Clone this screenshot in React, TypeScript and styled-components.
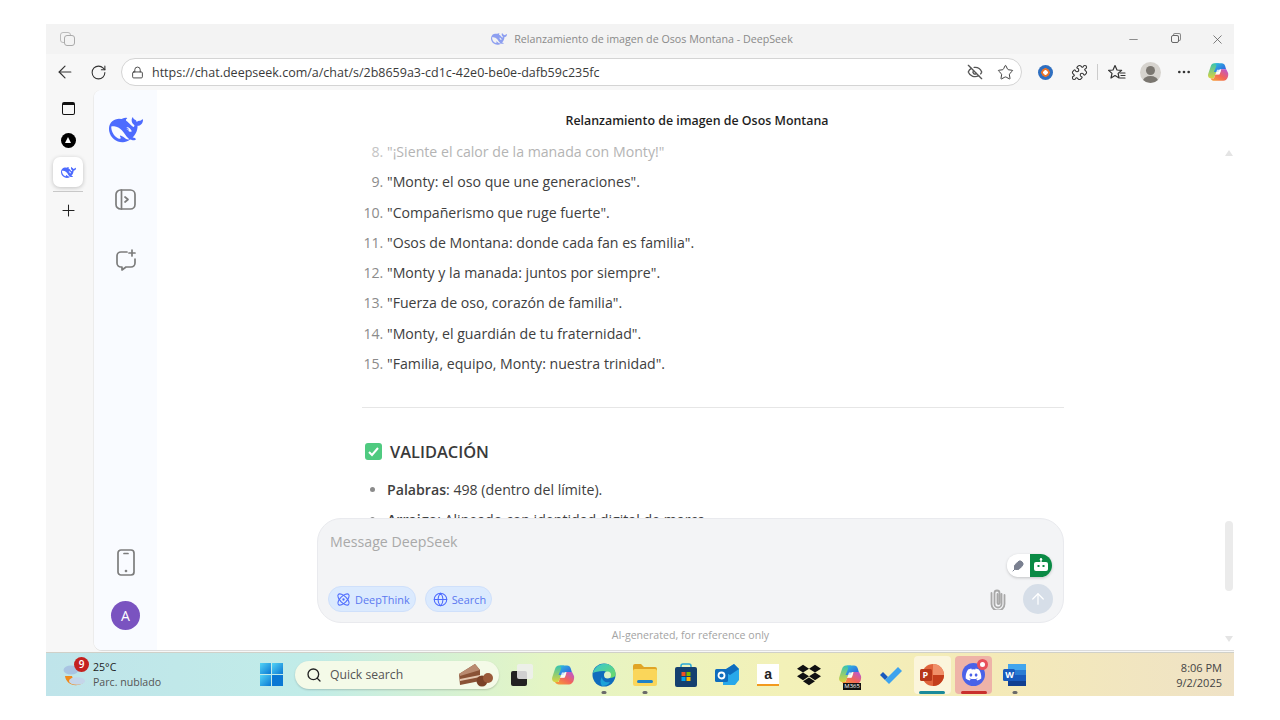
import React from "react";
import styled, { createGlobalStyle } from "styled-components";
import {
  ArrowLeft,
  ArrowUp,
  Atom,
  Feather,
  Globe,
  Lock,
  Minus,
  MoreHorizontal,
  Plus,
  RotateCw,
  Search,
  Star,
  X,
  EyeOff,
  Puzzle,
} from "lucide-react";
import { FaDiscord, FaDropbox } from "react-icons/fa";

const FONT = `"Open Sans", "Noto Sans", "Liberation Sans", sans-serif`;
const BLUE = "#4d6bfe";
const RED = "#c9302c";

const GlobalStyle = createGlobalStyle`
  html, body { margin: 0; padding: 0; background: #fff; }
  * { box-sizing: border-box; }
  body { font-family: ${FONT}; }
`;

const WHALE =
  "M23.748 4.482c-.254-.124-.364.113-.512.234-.051.039-.094.09-.137.136-.372.397-.806.657-1.373.626-.829-.046-1.537.214-2.163.848-.133-.782-.575-1.248-1.247-1.548-.352-.156-.708-.311-.955-.65-.172-.241-.219-.51-.305-.774-.055-.16-.11-.323-.293-.35-.2-.031-.278.136-.356.276-.313.572-.434 1.202-.422 1.84.027 1.436.633 2.58 1.838 3.393.137.093.172.187.129.323-.082.28-.18.552-.266.833-.055.179-.137.217-.329.14a5.526 5.526 0 01-1.736-1.18c-.857-.828-1.631-1.742-2.597-2.458a11.365 11.365 0 00-.689-.471c-.985-.957.13-1.743.388-1.836.27-.098.093-.432-.779-.428-.872.004-1.67.295-2.687.684a3.055 3.055 0 01-.465.137 9.597 9.597 0 00-2.883-.102c-1.885.21-3.39 1.102-4.497 2.623C.082 8.606-.231 10.684.152 12.85c.403 2.284 1.569 4.175 3.36 5.653 1.858 1.533 3.997 2.284 6.438 2.14 1.482-.085 3.133-.284 4.994-1.86.47.234.962.327 1.78.397.63.059 1.236-.03 1.705-.128.735-.156.684-.837.419-.961-2.155-1.004-1.682-.595-2.113-.926 1.096-1.296 2.746-2.642 3.392-7.003.05-.347.007-.565 0-.845-.004-.17.035-.237.23-.256a4.173 4.173 0 001.545-.475c1.396-.763 1.96-2.015 2.093-3.517.02-.23-.004-.467-.247-.588zM11.581 18c-2.089-1.642-3.102-2.183-3.52-2.16-.392.024-.321.471-.235.763.09.288.207.486.371.739.114.167.192.416-.113.603-.673.416-1.842-.14-1.897-.167-1.361-.802-2.5-1.86-3.301-3.307-.774-1.393-1.224-2.887-1.298-4.482-.02-.386.093-.522.477-.592a4.696 4.696 0 011.529-.039c2.132.312 3.946 1.265 5.468 2.774.868.86 1.525 1.887 2.202 2.891.72 1.066 1.494 2.082 2.48 2.914.348.292.625.514.891.677-.802.09-2.14.11-3.054-.614zm1-6.44a.306.306 0 01.415-.287.302.302 0 01.2.288.306.306 0 01-.31.307.303.303 0 01-.304-.308zm3.11 1.596c-.2.081-.399.151-.59.16a1.245 1.245 0 01-.798-.254c-.274-.23-.47-.358-.552-.758a1.73 1.73 0 01.016-.588c.07-.327-.008-.537-.239-.727-.187-.156-.426-.199-.688-.199a.559.559 0 01-.254-.078c-.11-.054-.2-.19-.114-.358.028-.054.16-.186.192-.21.356-.202.767-.136 1.146.016.352.144.618.408 1.001.782.391.451.462.576.685.914.176.265.336.537.445.848.067.195-.019.354-.25.452z";

const Whale = ({ size, color = BLUE }: { size: number; color?: string }) => (
  <svg width={size} height={size} viewBox="0 0 24 24" fill={color}>
    <path d={WHALE} />
  </svg>
);

const CopilotIcon = ({ size, id }: { size: number; id: string }) => (
  <svg width={size} height={size} viewBox="0 0 24 24">
    <defs>
      <linearGradient id={`${id}A`} x1="0" y1="0" x2="1" y2="1">
        <stop offset="0" stopColor="#2fc0e0" />
        <stop offset="1" stopColor="#2f55e0" />
      </linearGradient>
      <linearGradient id={`${id}B`} x1="0" y1="1" x2="1" y2="0">
        <stop offset="0" stopColor="#f7a733" />
        <stop offset="0.5" stopColor="#f2645a" />
        <stop offset="1" stopColor="#b455e0" />
      </linearGradient>
      <linearGradient id={`${id}C`} x1="0" y1="0" x2="0" y2="1">
        <stop offset="0" stopColor="#35c4b0" />
        <stop offset="1" stopColor="#dcd43e" />
      </linearGradient>
    </defs>
    <path d="M8 2.500h5L10 14l-3 5H4.500C2 19 .6 17 1.200 14.500L4 6c.7-2.300 2-3.500 4-3.500z" fill={`url(#${id}C)`} />
    <path d="M8 2.500h8c2 0 3.200 1.200 3.800 3l1 3.500H14l-1.500 3H7.500L10 6c.5-1.500-.5-3.500-2-3.500z" fill={`url(#${id}A)`} />
    <path d="M23 13c.7 3-.9 8.500-5 8.500H8c-2 0-3.400-1-4-2.500h3.500l2-5h4.500l1.500-5h5.500z" fill={`url(#${id}B)`} />
    <path d="M11 9.500h4.500L13.500 15H9z" fill="#fff" fillOpacity="0.8" />
  </svg>
);

const Windows = () => (
  <svg width="23" height="23" viewBox="0 0 22 22">
    <defs>
      <linearGradient id="winA" x1="0" y1="0" x2="1" y2="1">
        <stop offset="0" stopColor="#52d3f5" />
        <stop offset="1" stopColor="#0a78d4" />
      </linearGradient>
    </defs>
    <rect x="0" y="0" width="10.500" height="10.500" fill="url(#winA)" />
    <rect x="11.500" y="0" width="10.500" height="10.500" fill="url(#winA)" />
    <rect x="0" y="11.500" width="10.500" height="10.500" fill="url(#winA)" />
    <rect x="11.500" y="11.500" width="10.500" height="10.500" fill="#0a78d4" />
  </svg>
);

const Weather = () => (
  <svg width="30" height="30" viewBox="0 0 30 30">
    <ellipse cx="9" cy="10" rx="7.500" ry="4.500" fill="#a9c4e2" />
    <path d="M3 16c1 8 10 12 18 7-7 .5-10-2-11-7z" fill="#f08a1c" />
    <ellipse cx="15" cy="21" rx="8" ry="3.800" fill="#c5d6ea" />
  </svg>
);

const Cake = () => (
  <svg width="34" height="24" viewBox="0 0 34 24">
    <path d="M0 11 16 1l5 6v11L1 22z" fill="#8a5236" />
    <path d="M0 11 16 1l5 6L1 13z" fill="#b98a70" />
    <path d="M1 16l20-4v2L1 18z" fill="#e5c7b0" />
    <circle cx="23" cy="18" r="5.500" fill="#7b4228" />
    <circle cx="29" cy="15" r="5" fill="#9a5a3a" />
  </svg>
);

const TaskView = () => (
  <svg width="24" height="24" viewBox="0 0 24 24">
    <rect x="1" y="8" width="16" height="15" rx="2" fill="#222" />
    <rect x="7" y="1" width="16" height="15" rx="2" fill="#eee" fillOpacity="0.85" />
  </svg>
);

const Edge = () => (
  <svg width="24" height="24" viewBox="0 0 24 24">
    <defs>
      <linearGradient id="edA" x1="0" y1="0" x2="1" y2="1">
        <stop offset="0" stopColor="#36c6d6" />
        <stop offset="1" stopColor="#6fdc5e" />
      </linearGradient>
    </defs>
    <circle cx="12" cy="12" r="11.500" fill="#0f6cbd" />
    <path d="M1 10C3 2 12-1 18 2c4 2 6 6 5.500 10-.2 2-3 3-6 3-2 0-3-1-2.500-2 .8-2-.5-5-3.500-5C6 8 3 9 1 10z" fill="url(#edA)" />
    <path d="M10 14c0 4 4 6 8 5-2 3-5 4-8 4-2-3-2-6 0-9z" fill="#1aa3d8" />
    <circle cx="15.500" cy="12" r="3.500" fill="#ddf3c8" />
  </svg>
);

const Folder = () => (
  <svg width="24" height="22" viewBox="0 0 24 22">
    <path d="M0 2a2 2 0 012-2h6l3 3h11a2 2 0 012 2v2H0z" fill="#e0a525" />
    <rect x="0" y="5" width="24" height="17" rx="2" fill="#fad65a" />
    <rect x="4" y="16" width="16" height="3" rx="1.500" fill="#1f82c8" />
  </svg>
);

const Store = () => (
  <svg width="22" height="24" viewBox="0 0 22 24">
    <path d="M6 5V3a2 2 0 012-2h6a2 2 0 012 2v2" fill="none" stroke="#28a8d8" strokeWidth="1.500" />
    <rect x="0" y="4" width="22" height="20" rx="2" fill="#15406f" />
    <rect x="6.500" y="9" width="4" height="4" fill="#f25022" />
    <rect x="11.500" y="9" width="4" height="4" fill="#7fba00" />
    <rect x="6.500" y="14" width="4" height="4" fill="#00a4ef" />
    <rect x="11.500" y="14" width="4" height="4" fill="#ffb900" />
  </svg>
);

const Outlook = () => (
  <svg width="24" height="22" viewBox="0 0 24 22">
    <path d="M8 7 19 0l5 5v11l-4 5H8z" fill="#28a8ea" />
    <path d="M8 7 19 0l5 5-9 6z" fill="#0f6cbd" />
    <rect x="0" y="5" width="13" height="13" rx="1.500" fill="#0f6cbd" />
    <circle cx="6.500" cy="11.500" r="3" fill="none" stroke="#fff" strokeWidth="1.800" />
  </svg>
);

const ToDo = () => (
  <svg width="24" height="18" viewBox="0 0 24 18">
    <path d="M1 9l3-3 5 5-3 3z" fill="#195abd" />
    <path d="M6 14 19 1l4 4L10 18z" fill="#3da3ee" />
  </svg>
);

const PowerPoint = () => (
  <svg width="24" height="22" viewBox="0 0 24 22">
    <circle cx="13" cy="11" r="11" fill="#e0643c" />
    <path d="M13 0a11 11 0 0111 11H13z" fill="#f0906a" />
    <path d="M13 11h11a11 11 0 01-11 11z" fill="#c43e1c" />
    <rect x="0" y="5" width="12" height="12" rx="1.500" fill="#b7381a" />
  </svg>
);

const WordSheet = () => (
  <svg width="23" height="22" viewBox="0 0 23 22">
    <rect x="5" y="0" width="18" height="22" rx="2" fill="#2b7cd3" />
    <rect x="5" y="0" width="18" height="6" fill="#41a5ee" />
    <rect x="5" y="11" width="18" height="6" fill="#185abd" />
    <rect x="5" y="17" width="18" height="5" fill="#103f91" />
    <rect x="0" y="5" width="12" height="12" rx="1.500" fill="#185abd" />
  </svg>
);

const FavoritesIcon = () => (
  <svg width="18" height="17" viewBox="0 0 18 17" fill="none" stroke="#333" strokeWidth="1.200" strokeLinejoin="round">
    <path d="M7 1.500 9 6l4.600.4-3.500 3 1 4.600L7 11.600 3 14l1-4.600-3.400-3L5 6z" />
    <path d="M12 9h5M13 11.500h4M12 14h5" strokeLinecap="round" />
  </svg>
);

const PhoneIcon = () => (
  <svg width="18" height="27" viewBox="0 0 18 27" fill="none" stroke="#7c7c7c" strokeWidth="1.700">
    <rect x="1" y="1" width="16" height="25" rx="3" />
    <path d="M7 4.500h4" strokeLinecap="round" />
    <circle cx="9" cy="22" r="0.500" fill="#7c7c7c" />
  </svg>
);

const ClipIcon = () => (
  <svg width="16" height="22" viewBox="0 0 16 22" fill="none" stroke="#a8a8a8" strokeWidth="1.800" strokeLinecap="round">
    <path d="M11.500 6v10a3.500 3.500 0 01-7 0V5a2.500 2.500 0 015 0v10a1 1 0 01-2 0V6" />
    <path d="M14.500 7v9a6.500 6.500 0 01-13 0V5" />
  </svg>
);

const BotIcon = () => (
  <svg width="16" height="15" viewBox="0 0 16 15">
    <rect x="1" y="4" width="14" height="9" rx="2" fill="#fff" />
    <path d="M8 4V1.500" stroke="#fff" strokeWidth="1.300" />
    <circle cx="8" cy="1.300" r="1.200" fill="#fff" />
    <rect x="4.500" y="7" width="2" height="2" fill="#0a8a45" />
    <rect x="9.500" y="7" width="2" height="2" fill="#0a8a45" />
  </svg>
);

const CheckIcon = () => (
  <svg width="17" height="17" viewBox="0 0 17 17">
    <rect width="17" height="17" rx="3" fill="#4fca80" />
    <path d="M4 9l3 3 6-7" fill="none" stroke="#fff" strokeWidth="2" />
  </svg>
);

const items = [
  '"¡Siente el calor de la manada con Monty!"',
  '"Monty: el oso que une generaciones".',
  '"Compañerismo que ruge fuerte".',
  '"Osos de Montana: donde cada fan es familia".',
  '"Monty y la manada: juntos por siempre".',
  '"Fuerza de oso, corazón de familia".',
  '"Monty, el guardián de tu fraternidad".',
  '"Familia, equipo, Monty: nuestra trinidad".',
];

const App = () => {
  return (
    <Page>
      <GlobalStyle />
      <BrowserWindow>
        <TitleBar>
          <WorkspaceIcon>
            <WorkspaceBack />
            <WorkspaceFront />
          </WorkspaceIcon>
          <TabTitle>
            <Whale size={16} color="#8d9ff0" />
            <span>Relanzamiento de imagen de Osos Montana - DeepSeek</span>
          </TabTitle>
          <WindowControls>
            <Minus size={13} strokeWidth={1.2} />
            <RestoreIcon />
            <X size={15} strokeWidth={1.2} />
          </WindowControls>
        </TitleBar>

        <Toolbar>
          <ToolIcon $width={38}>
            <ArrowLeft size={20} strokeWidth={1.4} />
          </ToolIcon>
          <ToolIcon $width={28}>
            <RotateCw size={17} strokeWidth={1.5} />
          </ToolIcon>
          <UrlBar>
            <Lock size={13} strokeWidth={1.6} />
            <UrlText>
              https://chat.deepseek.com/a/chat/s/2b8659a3-cd1c-42e0-be0e-dafb59c235fc
            </UrlText>
            <UrlActions>
              <EyeOff size={16} strokeWidth={2} color="#555" />
              <Star size={17} strokeWidth={1.3} color="#333" />
            </UrlActions>
          </UrlBar>
          <ExtensionBox>
            <ToolIcon $width={34}>
              <ExtensionBadge />
            </ToolIcon>
            <ToolIcon $width={34}>
              <Puzzle size={17} strokeWidth={1.5} />
            </ToolIcon>
            <ToolDivider />
            <ToolIcon $width={34}>
              <FavoritesIcon />
            </ToolIcon>
            <ToolIcon $width={32}>
              <ProfileBadge>
                <ProfileHead />
                <ProfileBody />
              </ProfileBadge>
            </ToolIcon>
            <ToolIcon $width={36}>
              <MoreHorizontal size={16} />
            </ToolIcon>
            <ToolIcon $width={32}>
              <CopilotIcon size={22} id="cpTool" />
            </ToolIcon>
          </ExtensionBox>
        </Toolbar>

        <Body>
          <EdgeBar>
            <EdgeIcon>
              <PanelGlyph />
            </EdgeIcon>
            <EdgeIcon>
              <BlackDot />
            </EdgeIcon>
            <ActiveTile>
              <Whale size={15} />
            </ActiveTile>
            <EdgeDivider />
            <EdgeIcon>
              <Plus size={19} strokeWidth={1.3} />
            </EdgeIcon>
          </EdgeBar>

          <MainPanel>
            <Rail>
              <Whale size={34} />
              <RailButton $top={42}>
                <svg width="21" height="21" viewBox="0 0 21 21" fill="none" stroke="#7c7c7c" strokeWidth="1.700">
                  <rect x="1" y="1" width="19" height="19" rx="4.500" />
                  <path d="M6.500 1v19M10 8l3 2.500-3 2.500" strokeLinecap="round" strokeLinejoin="round" />
                </svg>
              </RailButton>
              <RailButton $top={39}>
                <svg width="22" height="22" viewBox="0 0 22 22" fill="none" stroke="#7c7c7c" strokeWidth="1.700" strokeLinecap="round" strokeLinejoin="round">
                  <path d="M12 3H6a4 4 0 00-4 4v7a4 4 0 004 4h1v3l4-3h5a4 4 0 004-4v-4" />
                  <path d="M17 1v6M14 4h6" />
                </svg>
              </RailButton>
              <RailSpacer />
              <PhoneIcon />
              <Avatar>A</Avatar>
            </Rail>

            <ChatColumn>
              <ChatTitle>Relanzamiento de imagen de Osos Montana</ChatTitle>
              <Thread>
                <NumberList start={8}>
                  {items.map((text, i) => (
                    <NumberItem key={text} $faded={i === 0}>
                      {text}
                    </NumberItem>
                  ))}
                </NumberList>
                <Rule />
                <SectionHead>
                  <CheckIcon />
                  VALIDACIÓN
                </SectionHead>
                <BulletList>
                  <li>
                    <strong>Palabras</strong>: 498 (dentro del límite).
                  </li>
                  <li>
                    <strong>Arraigo</strong>: Alineado con identidad digital de marca
                  </li>
                </BulletList>
              </Thread>

              <Composer>
                <Placeholder>Message DeepSeek</Placeholder>
                <ModelRow>
                  <ModelToggle>
                    <ModelSide>
                      <Feather size={12} color="#7a8090" fill="#7a8090" />
                    </ModelSide>
                    <ModelSide $active>
                      <BotIcon />
                    </ModelSide>
                  </ModelToggle>
                </ModelRow>
                <ComposerFoot>
                  <Chip>
                    <Atom size={15} strokeWidth={1.7} />
                    DeepThink
                  </Chip>
                  <Chip>
                    <Globe size={15} strokeWidth={1.7} />
                    Search
                  </Chip>
                  <FootSpacer />
                  <ClipIcon />
                  <SendButton>
                    <ArrowUp size={18} strokeWidth={1.6} color="#fff" />
                  </SendButton>
                </ComposerFoot>
              </Composer>
              <Disclaimer>AI-generated, for reference only</Disclaimer>

              <ScrollTrack>
                <ScrollArrow $up />
                <ScrollThumb />
                <ScrollArrow />
              </ScrollTrack>
            </ChatColumn>
          </MainPanel>
        </Body>

        <Taskbar>
          <WeatherBox>
            <WeatherIcon>
              <Weather />
              <WeatherBadge>9</WeatherBadge>
            </WeatherIcon>
            <WeatherText>
              <WeatherTemp>25°C</WeatherTemp>
              <WeatherDesc>Parc. nublado</WeatherDesc>
            </WeatherText>
          </WeatherBox>
          <StartButton>
            <Windows />
          </StartButton>
          <SearchBox>
            <Search size={16} strokeWidth={2} color="#222" />
            <SearchLabel>Quick search</SearchLabel>
            <Cake />
          </SearchBox>
          <TaskIcons>
            <TaskIcon>
              <TaskView />
            </TaskIcon>
            <TaskIcon>
              <CopilotIcon size={24} id="cpTask" />
            </TaskIcon>
            <TaskIcon $dot>
              <Edge />
            </TaskIcon>
            <TaskIcon $dot>
              <Folder />
            </TaskIcon>
            <TaskIcon>
              <Store />
            </TaskIcon>
            <TaskIcon>
              <Outlook />
            </TaskIcon>
            <TaskIcon>
              <AmazonTile>a</AmazonTile>
            </TaskIcon>
            <TaskIcon>
              <FaDropbox size={24} color="#111" />
            </TaskIcon>
            <TaskIcon>
              <Stacked>
                <CopilotIcon size={24} id="cpM365" />
                <M365Tag>M365</M365Tag>
              </Stacked>
            </TaskIcon>
            <TaskIcon>
              <ToDo />
            </TaskIcon>
            <TaskIcon $tile="#fbf5dc" $bar="#1a8a9a">
              <Stacked>
                <PowerPoint />
                <AppLetter>P</AppLetter>
              </Stacked>
            </TaskIcon>
            <TaskIcon $tile="#eeb3a8" $bar={RED}>
              <DiscordDisc>
                <FaDiscord size={17} color="#fff" />
              </DiscordDisc>
              <DiscordBadge />
            </TaskIcon>
            <TaskIcon $dot>
              <Stacked>
                <WordSheet />
                <AppLetter>W</AppLetter>
              </Stacked>
            </TaskIcon>
          </TaskIcons>
          <Clock>
            <span>8:06 PM</span>
            <span>9/2/2025</span>
          </Clock>
        </Taskbar>
      </BrowserWindow>
    </Page>
  );
};

export default App;

const Page = styled.div`
  width: 1280px;
  height: 720px;
  padding: 24px 46px;
  background: #fff;
  overflow: hidden;
`;

const BrowserWindow = styled.div`
  width: 1188px;
  height: 672px;
  display: flex;
  flex-direction: column;
  background: #f7f7f7;
`;

const TitleBar = styled.div`
  height: 30px;
  flex: none;
  display: flex;
  align-items: center;
  background: #f3f3f3;
  padding-left: 14px;
`;

const WorkspaceIcon = styled.div`
  width: 16px;
  height: 15px;
  position: relative;
`;

const WorkspaceBack = styled.div`
  position: absolute;
  left: 0;
  top: 0;
  width: 11px;
  height: 11px;
  border: 1px solid #bbb;
  border-radius: 3px;
`;

const WorkspaceFront = styled(WorkspaceBack)`
  left: 4px;
  top: 3px;
  background: #f3f3f3;
  border-color: #aaa;
`;

const TabTitle = styled.div`
  flex: 1;
  display: flex;
  align-items: center;
  justify-content: center;
  gap: 7px;
  padding-left: 87px;
  font-size: 10.7px;
  color: #8a8a8a;
`;

const WindowControls = styled.div`
  width: 113px;
  display: flex;
  align-items: center;
  justify-content: space-between;
  padding-right: 9px;
  padding-left: 6px;
  color: #555;
`;

const RestoreIcon = styled.div`
  width: 8px;
  height: 8px;
  border: 1px solid #666;
  border-radius: 2px;
  box-shadow: 2px -2px 0 -1px #f3f3f3, 2px -2px 0 0 #888;
`;

const Toolbar = styled.div`
  height: 36px;
  flex: none;
  display: flex;
  align-items: center;
  background: #f7f7f7;
  color: #333;
`;

const ToolIcon = styled.div<{ $width: number }>`
  width: ${(p) => p.$width}px;
  flex: none;
  display: flex;
  justify-content: center;
`;

const UrlBar = styled.div`
  width: 901px;
  height: 28px;
  margin-left: 9px;
  display: flex;
  align-items: center;
  background: #fff;
  border: 1px solid #d4d4d4;
  border-radius: 14px;
  padding: 0 7px 0 9px;
`;

const UrlText = styled.div`
  flex: 1;
  margin-left: 8px;
  font-size: 12.5px;
  color: #3a3a3a;
  white-space: nowrap;
`;

const UrlActions = styled.div`
  display: flex;
  align-items: center;
  gap: 14px;
`;

const ExtensionBox = styled.div`
  flex: 1;
  display: flex;
  align-items: center;
  padding-left: 6px;
`;

const ExtensionBadge = styled.div`
  width: 15px;
  height: 15px;
  border-radius: 50%;
  background: radial-gradient(circle at 50% 50%, #fff 0 2px, #e8742c 2.5px 4px, #2f6fc0 4.5px);
`;

const ToolDivider = styled.div`
  width: 1px;
  height: 16px;
  margin: 0 2px 0 1px;
  background: #ccc;
`;

const ProfileBadge = styled.div`
  width: 21px;
  height: 21px;
  border-radius: 50%;
  background: #d6d3ce;
  position: relative;
  overflow: hidden;
`;

const ProfileHead = styled.div`
  position: absolute;
  left: 6px;
  top: 4px;
  width: 9px;
  height: 9px;
  border-radius: 50%;
  background: #7a7670;
`;

const ProfileBody = styled.div`
  position: absolute;
  left: 3px;
  top: 14px;
  width: 15px;
  height: 10px;
  border-radius: 50%;
  background: #7a7670;
`;

const Body = styled.div`
  flex: 1;
  min-height: 0;
  display: flex;
  background: #f7f7f7;
`;

const EdgeBar = styled.div`
  width: 48px;
  flex: none;
  display: flex;
  flex-direction: column;
  align-items: center;
  padding-top: 2px;
  padding-right: 4px;
`;

const EdgeIcon = styled.div`
  height: 32px;
  display: flex;
  align-items: center;
  justify-content: center;
  color: #222;
`;

const PanelGlyph = styled.div`
  width: 13px;
  height: 13px;
  border: 1.5px solid #111;
  border-top-width: 3px;
  border-radius: 2px;
`;

const BlackDot = styled.div`
  width: 15px;
  height: 15px;
  border-radius: 50%;
  background: #000;
  position: relative;

  &::after {
    content: "";
    position: absolute;
    left: 4px;
    top: 4px;
    border-left: 3.5px solid transparent;
    border-right: 3.5px solid transparent;
    border-bottom: 6px solid #fff;
  }
`;

const ActiveTile = styled.div`
  width: 30px;
  height: 30px;
  margin-top: 1px;
  border-radius: 7px;
  background: #fff;
  box-shadow: 0 1px 4px rgba(0, 0, 0, 0.22);
  display: flex;
  align-items: center;
  justify-content: center;
`;

const EdgeDivider = styled.div`
  width: 30px;
  height: 1px;
  background: #c8c8c8;
  margin: 4px 0 2px;
`;

const MainPanel = styled.div`
  flex: 1;
  min-width: 0;
  display: flex;
  background: #fff;
  border-radius: 8px 0 0 8px;
  box-shadow: -1px 0 0 #ececec, 0 1px 0 #dcdcdc;
  overflow: hidden;
`;

const Rail = styled.div`
  width: 63px;
  flex: none;
  background: #f9fbff;
  display: flex;
  flex-direction: column;
  align-items: center;
  padding: 23px 0 20px;
`;

const RailButton = styled.div<{ $top: number }>`
  margin-top: ${(p) => p.$top}px;
  display: flex;
`;

const RailSpacer = styled.div`
  flex: 1;
`;

const Avatar = styled.div`
  width: 29px;
  height: 29px;
  margin-top: 25px;
  border-radius: 50%;
  background: #7a53c0;
  color: #fff;
  font-size: 14px;
  display: flex;
  align-items: center;
  justify-content: center;
`;

const ChatColumn = styled.div`
  flex: 1;
  min-width: 0;
  position: relative;
  overflow: hidden;
`;

const ChatTitle = styled.div`
  height: 52px;
  padding: 21px 0 0 3px;
  text-align: center;
  font-size: 12.4px;
  font-weight: 600;
  color: #1f1f1f;
  line-height: 20px;
`;

const Thread = styled.div`
  width: 702px;
  margin-left: 205px;
  font-size: 14.15px;
  color: #404040;
`;

const NumberList = styled.ol`
  margin: -5px 0 0;
  padding: 0 0 0 25px;
  list-style: decimal;

  li::marker {
    color: #8b8b8b;
  }
`;

const NumberItem = styled.li<{ $faded?: boolean }>`
  height: 30.3px;
  line-height: 30.3px;
  color: ${(p) => (p.$faded ? "#b4b4b4" : "#404040")};

  &&::marker {
    color: ${(p) => (p.$faded ? "#c4c4c4" : "#8b8b8b")};
  }
`;

const Rule = styled.div`
  height: 1px;
  background: #e6e6e6;
  margin-top: 28px;
`;

const SectionHead = styled.div`
  display: flex;
  align-items: center;
  gap: 8px;
  margin: 31px 0 0 3px;
  height: 24px;
  font-size: 16.4px;
  font-weight: 600;
  color: #3a3a3a;
`;

const BulletList = styled.ul`
  margin: 12px 0 0;
  padding: 0 0 0 25px;
  list-style: disc;
  line-height: 30px;

  li::marker {
    color: #8b8b8b;
  }

  strong {
    font-weight: 600;
  }
`;

const Composer = styled.div`
  position: absolute;
  left: 160px;
  top: 428px;
  width: 747px;
  height: 105px;
  background: #f3f4f6;
  border: 1px solid #e9eaee;
  border-radius: 24px;
  padding: 14px 10px 8px;
  display: flex;
  flex-direction: column;
`;

const Placeholder = styled.div`
  padding-left: 2px;
  font-size: 14.2px;
  line-height: 18px;
  color: #a9a9a9;
`;

const ModelRow = styled.div`
  display: flex;
  justify-content: flex-end;
  margin: 3px 1px 0 0;
`;

const ModelToggle = styled.div`
  width: 45px;
  height: 23px;
  border-radius: 12px;
  overflow: hidden;
  display: flex;
  box-shadow: 0 1px 3px rgba(0, 0, 0, 0.2);
`;

const ModelSide = styled.div<{ $active?: boolean }>`
  flex: 1;
  display: flex;
  align-items: center;
  justify-content: center;
  background: ${(p) => (p.$active ? "#0a8a45" : "#fff")};
`;

const ComposerFoot = styled.div`
  margin-top: auto;
  display: flex;
  align-items: center;
  gap: 9px;
`;

const FootSpacer = styled.div`
  flex: 1;
`;

const Chip = styled.div`
  height: 26px;
  display: flex;
  align-items: center;
  gap: 4px;
  padding: 0 5px 0 7px;
  border-radius: 13px;
  background: #dbeafe;
  border: 1px solid #cfe0fb;
  color: #5a78f0;
  font-size: 10.9px;

  svg {
    color: ${BLUE};
  }
`;

const SendButton = styled.div`
  width: 30px;
  height: 30px;
  margin-left: 8px;
  border-radius: 50%;
  background: #d6dee8;
  display: flex;
  align-items: center;
  justify-content: center;
`;

const Disclaimer = styled.div`
  position: absolute;
  left: 160px;
  top: 538px;
  width: 747px;
  text-align: center;
  font-size: 10.6px;
  color: #a3a3a3;
`;

const ScrollTrack = styled.div`
  position: absolute;
  right: 0;
  top: 60px;
  bottom: 8px;
  width: 10px;
  display: flex;
  flex-direction: column;
  align-items: center;
  justify-content: space-between;
`;

const ScrollThumb = styled.div`
  position: absolute;
  top: 371px;
  width: 8px;
  height: 70px;
  border-radius: 4px;
  background: #ebebeb;
`;

const ScrollArrow = styled.div<{ $up?: boolean }>`
  width: 0;
  height: 0;
  border-left: 4px solid transparent;
  border-right: 4px solid transparent;
  ${(p) =>
    p.$up ? "border-bottom: 6px solid #e4e4e4;" : "border-top: 6px solid #e4e4e4;"}
`;

const Taskbar = styled.div`
  margin-top: 2px;
  height: 44px;
  flex: none;
  display: flex;
  align-items: center;
  background: linear-gradient(90deg, #bfe4ea 0%, #c1ece8 22%, #e4f5c4 42%, #f3f1b8 62%, #f4eab8 80%, #efe2c6 100%);
  border-top: 1px solid #d0d0c8;
`;

const WeatherBox = styled.div`
  width: 210px;
  display: flex;
  align-items: center;
  padding-left: 16px;
  gap: 1px;
`;

const WeatherIcon = styled.div`
  position: relative;
  width: 30px;
  height: 30px;
`;

const WeatherBadge = styled.div`
  position: absolute;
  left: 12px;
  top: -3px;
  width: 15px;
  height: 15px;
  border-radius: 50%;
  background: #c4211f;
  color: #fff;
  font-size: 10px;
  font-weight: 600;
  line-height: 15px;
  text-align: center;
`;

const WeatherText = styled.div`
  display: flex;
  flex-direction: column;
`;

const WeatherTemp = styled.span`
  font-size: 10.6px;
  line-height: 15px;
  color: #222;
`;

const WeatherDesc = styled.span`
  font-size: 10.6px;
  line-height: 15px;
  color: #555;
`;

const StartButton = styled.div`
  width: 35px;
  display: flex;
  justify-content: flex-start;
  margin-left: 4px;
`;

const SearchBox = styled.div`
  width: 204px;
  height: 28px;
  display: flex;
  align-items: center;
  border-radius: 14px;
  background: #f4fae8;
  box-shadow: 0 1px 2px rgba(0, 0, 0, 0.18);
  padding: 0 6px 0 11px;
`;

const SearchLabel = styled.span`
  flex: 1;
  margin-left: 8px;
  font-size: 12.2px;
  color: #555;
`;

const TaskIcons = styled.div`
  display: flex;
  align-items: center;
  margin-left: 2px;
`;

const TaskIcon = styled.div<{ $tile?: string; $bar?: string; $dot?: boolean }>`
  width: 41.1px;
  height: 38px;
  position: relative;
  display: flex;
  align-items: center;
  justify-content: center;

  ${(p) =>
    p.$tile &&
    `&::before {
      content: "";
      position: absolute;
      left: 2px;
      right: 2px;
      top: 0;
      bottom: 0;
      border-radius: 4px;
      background: ${p.$tile};
    }`}

  & > * {
    position: relative;
  }

  ${(p) =>
    (p.$bar || p.$dot) &&
    `&::after {
      content: "";
      position: absolute;
      bottom: 0;
      left: 50%;
      transform: translateX(-50%);
      height: 3px;
      width: ${p.$bar ? "26px" : "5px"};
      border-radius: 2px;
      background: ${p.$bar || "#6a6a6a"};
    }`}
`;

const AmazonTile = styled.div`
  width: 22px;
  height: 22px;
  background: #fff;
  color: #222;
  font-family: "Liberation Sans", sans-serif;
  font-size: 14px;
  font-weight: 700;
  line-height: 20px;
  text-align: center;
  border-bottom: 2px solid #f29a1f;
`;

const Stacked = styled.div`
  position: relative;
  display: flex;
`;

const M365Tag = styled.span`
  position: absolute;
  left: 5px;
  bottom: -3px;
  background: #111;
  color: #fff;
  font-size: 6px;
  line-height: 7px;
  padding: 0 1px;
`;

const AppLetter = styled.span`
  position: absolute;
  left: 2px;
  top: 5px;
  color: #fff;
  font-size: 9px;
  font-weight: 700;
  line-height: 12px;
`;

const DiscordDisc = styled.div`
  width: 23px;
  height: 23px;
  border-radius: 50%;
  background: #4a62e8;
  display: flex;
  align-items: center;
  justify-content: center;
`;

const DiscordBadge = styled.div`
  position: absolute !important;
  right: 6px;
  top: 3px;
  width: 11px;
  height: 11px;
  border-radius: 50%;
  background: #fff;
  border: 3px solid #e8505a;
`;

const Clock = styled.div`
  margin-left: auto;
  padding-right: 12px;
  display: flex;
  flex-direction: column;
  align-items: flex-end;
  font-size: 11px;
  line-height: 15px;
  color: #444;
`;
